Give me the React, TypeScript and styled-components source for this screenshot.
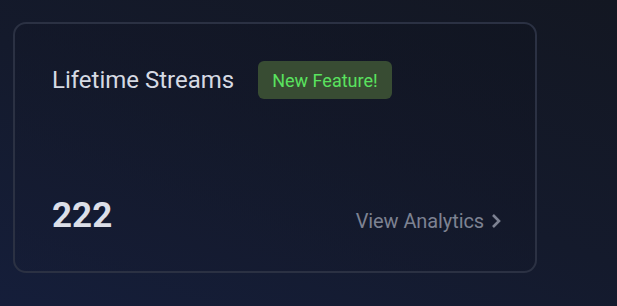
import React from "react";
import styled, { createGlobalStyle } from "styled-components";

const Global = createGlobalStyle`
  html, body { margin: 0; padding: 0; }
  body {
    width: 617px;
    height: 306px;
    overflow: hidden;
    background: linear-gradient(20deg, #151e3a 0%, #141a2c 50%, #131722 100%);
    font-family: Roboto, "Liberation Sans", sans-serif;
  }
`;

const Page = styled.div`
  padding: 22px 0 0 13px;
`;

const Card = styled.div`
  box-sizing: border-box;
  width: 524px;
  height: 251px;
  border: 2px solid #2b3143;
  border-radius: 13px;
  padding: 37px 33px 38px 37px;
  display: flex;
  flex-direction: column;
  justify-content: space-between;
  background: linear-gradient(200deg, rgba(16,20,32,0.6) 0%, rgba(22,28,52,0.4) 100%);
`;

const Header = styled.div`
  display: flex;
  align-items: center;
  gap: 24px;
`;

const Title = styled.div`
  font-size: 24px;
  color: #d6dae3;
`;

const Badge = styled.span`
  background: #384c33;
  color: #5ae35f;
  font-size: 18px;
  padding: 0 14px;
  height: 38px;
  display: inline-flex;
  align-items: center;
  border-radius: 6px;
`;

const Footer = styled.div`
  display: flex;
  align-items: flex-end;
  justify-content: space-between;
`;

const Value = styled.div`
  font-size: 35px;
  font-weight: 700;
  color: #dcdfe8;
  line-height: 1;
`;

const Link = styled.a`
  display: flex;
  align-items: center;
  gap: 6px;
  color: #7d8292;
  font-size: 20px;
  text-decoration: none;
  letter-spacing: -0.1px;
`;

export default function App() {
  return (
    <>
      <Global />
      <Page>
        <Card>
          <Header>
            <Title>Lifetime Streams</Title>
            <Badge>New Feature!</Badge>
          </Header>
          <Footer>
            <Value>222</Value>
            <Link href="#">
              View Analytics
              <svg width="12" height="16" viewBox="0 0 12 16">
                <path d="M3 2 L9 8 L3 14" fill="none" stroke="#7d8292" strokeWidth="2.6" />
              </svg>
            </Link>
          </Footer>
        </Card>
      </Page>
    </>
  );
}
